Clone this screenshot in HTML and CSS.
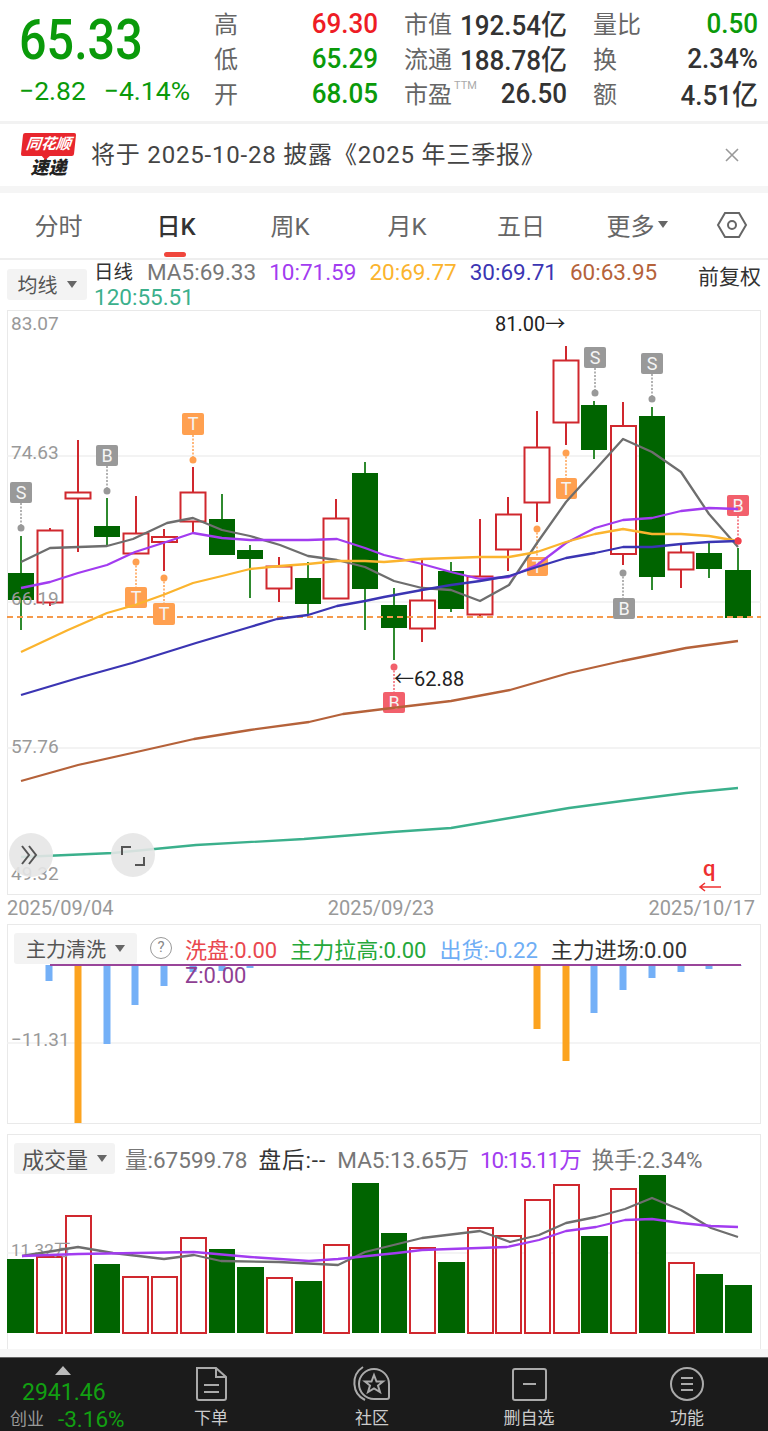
FILE: index.html
```html
<!DOCTYPE html>
<html>
<head>
  <title>65.33 日K</title>
  <link rel="stylesheet" href="styles.css">
</head>
<body>
  <div class="page">
    <!-- quote header -->
    <div class="quote">
      <div class="price-box">
        <div class="price"><span class="tall">65.33</span></div>
        <div class="change"><span>−2.82</span><span>−4.14%</span></div>
      </div>
      <div class="stats">
        <div class="stat"><span class="label">高</span><span class="val red tall-s">69.30</span></div>
        <div class="stat"><span class="label">市值</span><span class="val tall-s">192.54亿</span></div>
        <div class="stat"><span class="label">量比</span><span class="val green tall-s">0.50</span></div>
        <div class="stat"><span class="label">低</span><span class="val green tall-s">65.29</span></div>
        <div class="stat"><span class="label">流通</span><span class="val tall-s">188.78亿</span></div>
        <div class="stat"><span class="label">换</span><span class="val tall-s">2.34%</span></div>
        <div class="stat"><span class="label">开</span><span class="val green tall-s">68.05</span></div>
        <div class="stat"><span class="label">市盈<sup class="ttm">TTM</sup></span><span class="val tall-s">26.50</span></div>
        <div class="stat"><span class="label">额</span><span class="val tall-s">4.51亿</span></div>
      </div>
    </div>

    <!-- notice -->
    <div class="notice">
      <div class="logo">
        <div class="logo-top"><span>同花顺</span></div>
        <div class="logo-bottom">速递</div>
      </div>
      <div class="notice-text">将于 2025-10-28 披露《2025 年三季报》</div>
      <svg class="close" width="16" height="16" viewBox="0 0 16 16"><path d="M2 2L14 14M14 2L2 14"/></svg>
    </div>

    <!-- period tabs -->
    <div class="tabs">
      <div class="tab">分时</div>
      <div class="tab active">日K</div>
      <div class="tab">周K</div>
      <div class="tab">月K</div>
      <div class="tab">五日</div>
      <div class="tab">更多<span class="caret-s"></span></div>
      <div class="tab">
        <svg class="hex" width="32" height="28" viewBox="0 0 32 28"><path d="M9 2H23L30 14L23 26H9L2 14Z"/><circle cx="16" cy="14" r="4"/></svg>
      </div>
    </div>

    <!-- moving average legend -->
    <div class="legend">
      <div class="picker picker-ma">均线<span class="caret"></span></div>
      <div class="legend-text">
        <span class="c-dark legend-first">日线</span>
        <span class="c-grey">MA5:69.33</span>
        <span class="c-purple">10:71.59</span>
        <span class="c-orange">20:69.77</span>
        <span class="c-navy">30:69.71</span>
        <span class="c-brown">60:63.95</span>
        <span class="c-teal">120:55.51</span>
      </div>
      <div class="adjust">前复权</div>
    </div>

    <!-- candle chart -->
    <div class="panel panel-main">
      <svg class="chart" width="754" height="584" viewBox="7 310 754 584">
        <path class="grid" d="M7 456H761M7 602H761M7 748H761"/>
        <text class="axis" x="11" y="330">83.07</text>
        <text class="axis" x="11" y="459">74.63</text>
        <text class="axis" x="11" y="753">57.76</text>

        <path class="wick-g" d="M21 536V630M107 498V545M222 494V555M250 545V598M308 562V615M365 462V630M394 588V660M451 562V612M594 401V459M652 407V590M709 542V578M738 548V618"/>
        <path class="wick-r" d="M50 528V606M78 440V552M136 496V553M164 529V571M193 467V533M279 557V602M336 499V598M422 560V642M480 519V618M508 497V571M537 411V522M566 346V445M623 402V565M681 543V588"/>

        <g class="down">
          <rect x="8" y="573" width="26" height="27"/>
          <rect x="94" y="526" width="26" height="11"/>
          <rect x="209" y="519" width="26" height="36"/>
          <rect x="237" y="550" width="26" height="9"/>
          <rect x="295" y="578" width="26" height="26"/>
          <rect x="352" y="473" width="26" height="116"/>
          <rect x="381" y="605" width="26" height="23"/>
          <rect x="438" y="571" width="26" height="38"/>
          <rect x="581" y="405" width="26" height="45"/>
          <rect x="639" y="416" width="26" height="161"/>
          <rect x="696" y="553" width="26" height="16"/>
          <rect x="725" y="570" width="26" height="48"/>
        </g>
        <g class="up">
          <rect x="37.500" y="530.500" width="25" height="72"/>
          <rect x="65.500" y="492.500" width="25" height="6"/>
          <rect x="123.500" y="533.500" width="25" height="20"/>
          <rect x="152" y="537" width="25" height="5"/>
          <rect x="180.500" y="492.500" width="25" height="29"/>
          <rect x="266.500" y="566.500" width="25" height="22"/>
          <rect x="323.500" y="518.500" width="25" height="80"/>
          <rect x="410" y="600.500" width="25" height="28"/>
          <rect x="467.500" y="576.500" width="25" height="38"/>
          <rect x="496" y="514.500" width="25" height="35"/>
          <rect x="524.500" y="447.500" width="25" height="55"/>
          <rect x="553.500" y="360.500" width="25" height="62"/>
          <rect x="611" y="426" width="25" height="128"/>
          <rect x="668.500" y="552.500" width="25" height="17"/>
        </g>

        <text class="axis" x="11" y="605">66.19</text>
        <path class="price-line" d="M7 617H761"/>

        <!-- buy / sell marks -->
        <g class="mark mark-grey">
          <path d="M21 503V528M107 466V491M595 368V393M652 374V399M623 573V598"/>
          <circle cx="21" cy="528" r="3.500"/><circle cx="107" cy="491" r="3.500"/><circle cx="595" cy="393" r="3.500"/><circle cx="652" cy="399" r="3.500"/><circle cx="623" cy="573" r="3.500"/>
          <rect x="10" y="482" width="22" height="21" rx="2"/><rect x="96" y="445" width="22" height="21" rx="2"/><rect x="584" y="347" width="22" height="21" rx="2"/><rect x="641" y="353" width="22" height="21" rx="2"/><rect x="613" y="598" width="22" height="21" rx="2"/>
        </g>
        <g class="mark mark-orange">
          <path d="M193 435V460M136 562V587M164 578V603M566 453V478M537 529V557"/>
          <circle cx="193" cy="460" r="3.500"/><circle cx="136" cy="562" r="3.500"/><circle cx="164" cy="578" r="3.500"/><circle cx="566" cy="453" r="3.500"/><circle cx="537" cy="529" r="3.500"/>
          <rect x="182" y="413" width="22" height="22" rx="2"/><rect x="125" y="587" width="22" height="21" rx="2"/><rect x="153" y="603" width="22" height="22" rx="2"/><rect x="556" y="478" width="21" height="21" rx="2"/><rect x="527" y="557" width="21" height="19" rx="2"/>
        </g>
        <g class="mark mark-red">
          <path d="M738 516V541M394 667V692"/>
          <circle cx="738" cy="541" r="3.500"/><circle cx="394" cy="667" r="3.500"/>
          <rect x="727" y="495" width="22" height="21" rx="2"/><rect x="383" y="692" width="22" height="21" rx="2"/>
        </g>
        <g class="mark-text">
          <text x="21" y="499">S</text><text x="107" y="462">B</text><text x="595" y="364">S</text><text x="652" y="370">S</text><text x="624" y="615">B</text>
          <text x="193" y="430">T</text><text x="136" y="604">T</text><text x="164" y="620">T</text><text x="566" y="495">T</text><text x="537" y="573">T</text>
          <text x="738" y="512">B</text><text x="394" y="709">B</text>
        </g>

        <!-- moving averages -->
        <polyline class="ma c5" points="21,562 50,548 107,546 133,539 167,523 193,518 222,530 250,536 280,545 308,556 337,560 365,567 394,581 422,588 451,590 480,601 509,585 537,543 566,502 595,470 623,439 652,452 681,472 709,514 738,547"/>
        <polyline class="ma c10" points="21,588 50,582 78,573 107,565 135,552 163,543 193,533 222,538 250,540 280,540 308,540 337,539 365,548 384,555 422,564 451,572 480,579 509,577 537,565 566,543 595,528 623,520 652,518 681,511 709,508 738,509"/>
        <polyline class="ma c20" points="21,652 68,630 107,613 135,605 163,595 193,583 222,576 250,569 280,566 308,564 337,561 365,561 384,562 422,559 451,558 480,557 509,557 537,552 566,542 595,534 623,529 652,534 681,534 709,536 738,541"/>
        <polyline class="ma c30" points="21,695 78,678 132,663 196,643 250,627 277,619 308,615 337,606 365,601 384,597 422,590 451,585 480,581 509,576 537,567 566,558 595,553 623,547 652,547 681,544 709,542 738,541"/>
        <polyline class="ma c60" points="21,781 78,765 132,753 194,739 250,730 309,722 343,714 392,708 451,701 510,690 569,673 622,661 686,648 738,641"/>
        <polyline class="ma c120" points="21,857 113,853 196,845 304,839 392,832 451,828 510,818 569,808 622,801 686,793 738,788"/>

        <circle class="dot-red" cx="738" cy="541" r="3.500"/>

        <text class="peak" x="495" y="331">81.00→</text>
        <text class="peak" x="394" y="686">←62.88</text>

        <!-- overlay buttons -->
        <text class="axis" x="11" y="880">49.32</text>
        <circle class="round-btn" cx="31" cy="855" r="22"/>
        <path class="round-ico" d="M22 846L29 855L22 864M29 846L36 855L29 864"/>
        <circle class="round-btn" cx="133" cy="855" r="22"/>
        <path class="round-ico" d="M122 855V847H131M144 857V865H135"/>

        <text class="q" x="703" y="876">q</text>
        <path class="q-arrow" d="M721 887H700M705 883L700 887L705 891"/>
      </svg>
    </div>

    <div class="dates"><span>2025/09/04</span><span>2025/09/23</span><span>2025/10/17</span></div>

    <!-- capital indicator -->
    <div class="panel panel-flow">
      <svg class="chart" width="754" height="199" viewBox="7 924 754 199">
        <path class="grid" d="M7 1043H761"/>
        <g class="bar-blue">
          <rect x="45.500" y="965" width="7" height="16"/>
          <rect x="103.500" y="965" width="7" height="79"/>
          <rect x="131.500" y="965" width="7" height="40"/>
          <rect x="160.500" y="965" width="7" height="21"/>
          <rect x="189.500" y="965" width="7" height="7"/>
          <rect x="218.500" y="965" width="7" height="6"/>
          <rect x="246.500" y="965" width="7" height="3"/>
          <rect x="590.500" y="965" width="7" height="48"/>
          <rect x="619.500" y="965" width="7" height="25"/>
          <rect x="648.500" y="965" width="7" height="13"/>
          <rect x="677.500" y="965" width="7" height="7"/>
          <rect x="705.500" y="965" width="7" height="4"/>
          <rect x="734.500" y="965" width="7" height="1"/>
        </g>
        <g class="bar-orange">
          <rect x="74.500" y="965" width="7" height="158"/>
          <rect x="533.500" y="965" width="7" height="64"/>
          <rect x="562.500" y="965" width="7" height="96"/>
        </g>
        <path class="zero-line" d="M50 965H741"/>
        <text class="axis" x="11" y="1046">−11.31</text>
      </svg>
      <div class="panel-head head-flow">
        <div class="picker picker-flow">主力清洗<span class="caret"></span></div>
        <span class="help">?</span>
        <span class="flow-red">洗盘:0.00</span>
        <span class="flow-green">主力拉高:0.00</span>
        <span class="flow-blue">出货:-0.22</span>
        <span class="flow-dark">主力进场:0.00</span>
      </div>
      <div class="flow-z">Z:0.00</div>
    </div>

    <!-- volume -->
    <div class="panel panel-vol">
      <svg class="chart" width="754" height="214" viewBox="7 1134 754 214">
        <path class="grid" d="M7 1253H761"/>
        <g class="down">
          <rect x="7" y="1259" width="27" height="74"/>
          <rect x="94" y="1264" width="26" height="69"/>
          <rect x="209" y="1249" width="26" height="84"/>
          <rect x="237" y="1267" width="27" height="66"/>
          <rect x="295" y="1281" width="27" height="52"/>
          <rect x="352" y="1183" width="27" height="150"/>
          <rect x="381" y="1233" width="26" height="100"/>
          <rect x="438" y="1262" width="27" height="71"/>
          <rect x="581" y="1236" width="27" height="97"/>
          <rect x="639" y="1175" width="27" height="158"/>
          <rect x="696" y="1274" width="27" height="59"/>
          <rect x="725" y="1285" width="27" height="48"/>
        </g>
        <g class="up">
          <rect x="37" y="1257" width="25" height="76"/>
          <rect x="66" y="1216" width="25" height="117"/>
          <rect x="123" y="1277" width="25" height="56"/>
          <rect x="152" y="1277" width="25" height="56"/>
          <rect x="181" y="1238" width="25" height="95"/>
          <rect x="267" y="1278" width="25" height="55"/>
          <rect x="324" y="1245" width="25" height="88"/>
          <rect x="410" y="1248" width="25" height="85"/>
          <rect x="468" y="1228" width="25" height="105"/>
          <rect x="496" y="1236" width="25" height="97"/>
          <rect x="525" y="1200" width="25" height="133"/>
          <rect x="554" y="1185" width="25" height="148"/>
          <rect x="611" y="1189" width="25" height="144"/>
          <rect x="669" y="1263" width="25" height="70"/>
        </g>
        <text class="axis axis-vol" x="11" y="1256">11.32万</text>
        <polyline class="ma c5" points="22,1256 78,1247 113,1253 164,1259 194,1255 221,1261 279,1262 338,1265 365,1252 422,1238 480,1231 510,1242 539,1235 566,1223 596,1217 625,1209 652,1198 681,1210 711,1228 738,1237"/>
        <polyline class="ma c10" points="22,1256 78,1254 137,1253 194,1252 250,1257 309,1261 338,1259 397,1253 422,1250 507,1247 539,1240 566,1231 596,1227 625,1220 652,1219 681,1223 711,1226 738,1227"/>
      </svg>
      <div class="panel-head head-vol">
        <div class="picker picker-vol">成交量<span class="caret"></span></div>
        <span class="c-grey">量:67599.78</span>
        <span class="c-dark vol-after">盘后:--</span>
        <span class="c-grey">MA5:13.65万</span>
        <span class="c-purple vol-narrow">10:15.11万</span>
        <span class="c-grey">换手:2.34%</span>
      </div>
    </div>
    <div class="strip"></div>

    <!-- bottom bar -->
    <div class="footer">
      <div class="index">
        <span class="index-up"></span>
        <div class="index-val">2941.46</div>
        <div class="index-row"><span class="index-name">创业</span><span class="index-pct">-3.16%</span></div>
      </div>
      <div class="foot-item">
        <svg width="36" height="36" viewBox="0 0 36 36"><path d="M4 2H23L33 11V32Q33 34 31 34H6Q4 34 4 32ZM11 19H26M11 26H26"/><path d="M23 2V11H33"/></svg>
        <span>下单</span>
      </div>
      <div class="foot-item">
        <svg width="40" height="36" viewBox="0 0 40 36"><path d="M11 1A19 19 0 0 0 13 34M37 18V31Q37 33 35 33H22A15 15 0 1 1 37 18Z"/><path d="M22 9L24.500 15.500H31L26 19.500L28 26L22 22.500L16 26L18 19.500L13 15.500H19.500Z"/></svg>
        <span>社区</span>
      </div>
      <div class="foot-item">
        <svg width="36" height="36" viewBox="0 0 36 36"><rect x="2" y="3" width="33" height="31" rx="2"/><path d="M12 18H25"/></svg>
        <span>删自选</span>
      </div>
      <div class="foot-item">
        <svg width="36" height="36" viewBox="0 0 36 36"><circle cx="18" cy="18" r="16"/><path d="M12 12H24M12 18H24M12 24H24"/></svg>
        <span>功能</span>
      </div>
    </div>
  </div>
</body>
</html>
```

FILE: styles.css
```css
* {
  box-sizing: border-box;
}

body {
  margin: 0;
  background: #fff;
  font-family: Roboto, "Noto Sans CJK SC", sans-serif;
  color: #333;
}

.page {
  width: 768px;
  height: 1431px;
  overflow: hidden;
}

/* quote header */
.quote {
  display: flex;
  height: 124px;
  border-bottom: 3px solid #f2f2f2;
}

.price-box {
  width: 214px;
  padding: 13px 0 0 19px;
}

.price {
  font-size: 48.500px;
  font-weight: 500;
  line-height: 56px;
  color: #0a9a0a;
}

.tall {
  display: inline-block;
  transform: scaleY(1.15);
}

.change {
  display: flex;
  gap: 18px;
  margin-top: 6px;
  font-size: 26.500px;
  line-height: 32px;
  color: #0a9a0a;
}

.stats {
  display: grid;
  grid-template-columns: 164px 163px 165px;
  grid-auto-rows: 35px;
  column-gap: 26px;
  padding-top: 5px;
}

.stat {
  display: flex;
  justify-content: space-between;
  align-items: center;
}

.label {
  font-size: 24px;
  color: #666;
  white-space: nowrap;
}

.val {
  font-size: 26px;
  font-weight: 500;
  color: #333;
  white-space: nowrap;
}

.tall-s {
  display: inline-block;
  transform: scaleY(1.08);
}

.val.red {
  color: #ee1c25;
}

.val.green {
  color: #0a9a0a;
}

.ttm {
  font-size: 11px;
  color: #aaa;
  vertical-align: 14px;
  line-height: 0;
  margin-left: 2px;
}

/* notice */
.notice {
  display: flex;
  align-items: center;
  height: 69px;
  padding-left: 22px;
  border-bottom: 7px solid #f5f5f5;
}

.logo {
  width: 53px;
  margin-right: 16px;
  text-align: center;
}

.logo-top {
  position: relative;
  height: 23px;
  background: #e8262d;
  border-radius: 2px;
  transform: skewX(-6deg);
  color: #fff;
  font-size: 15px;
  font-style: italic;
  font-weight: 700;
  line-height: 23px;
}

.logo-top::after {
  content: "";
  position: absolute;
  left: 21px;
  bottom: -4px;
  border: 4px solid transparent;
  border-top: 4px solid #e8262d;
  border-bottom: 0;
}

.logo-bottom {
  margin-top: 2px;
  font-size: 18px;
  font-style: italic;
  font-weight: 900;
  line-height: 20px;
  color: #222;
}

.notice-text {
  flex: 1;
  margin-top: -5px;
  font-size: 24px;
  letter-spacing: 0.800px;
  color: #444;
  white-space: nowrap;
}

.close {
  margin-right: 28px;
}

.close path {
  fill: none;
  stroke: #999;
  stroke-width: 1.600;
}

/* tabs */
.tabs {
  display: grid;
  grid-template-columns: 117px 118px 110px 124px 104px 128px 62px;
  height: 67px;
  border-bottom: 2px solid #eee;
}

.tab {
  position: relative;
  display: flex;
  align-items: center;
  justify-content: center;
  padding-bottom: 2px;
  font-size: 24px;
  color: #666;
}

.tab.active {
  color: #333;
  font-weight: 500;
}

.tab.active::after {
  content: "";
  position: absolute;
  left: 47px;
  bottom: 1px;
  width: 22px;
  height: 5px;
  border-radius: 3px;
  background: #f0463c;
}

.caret-s {
  margin-left: 3px;
  border: 5px solid transparent;
  border-top: 7px solid #666;
  border-bottom: 0;
}

.hex path,
.hex circle {
  fill: none;
  stroke: #666;
  stroke-width: 2;
}

/* legend */
.legend {
  display: flex;
  height: 50px;
  padding-left: 7px;
}

.picker {
  display: flex;
  align-items: center;
  justify-content: center;
  gap: 9px;
  height: 31px;
  border-radius: 3px;
  background: #f3f3f3;
  font-size: 20px;
  color: #555;
}

.picker-ma {
  flex: none;
  width: 80px;
  margin-top: 9px;
}

.legend-text {
  display: flex;
  flex-wrap: wrap;
  column-gap: 13px;
  width: 590px;
  padding-left: 7px;
  font-size: 22.500px;
  line-height: 25px;
}

.legend-first {
  margin-right: 1px;
  font-size: 19.500px;
}

.caret {
  border: 5px solid transparent;
  border-top: 7px solid #666;
  border-bottom: 0;
}

.c-dark { color: #333; }
.c-grey { color: #777; }
.c-purple { color: #a23cf0; }
.c-orange { color: #fbb42e; }
.c-navy { color: #3b35b3; }
.c-brown { color: #b5623a; }
.c-teal { color: #3bb08c; }

.adjust {
  margin-left: 21px;
  font-size: 21px;
  line-height: 34px;
  white-space: nowrap;
}

/* chart panels */
.panel {
  position: relative;
  width: 754px;
  margin-left: 7px;
  border: 1.500px solid #e9e9e9;
}

.panel-main {
  height: 585px;
}

.panel-flow {
  height: 200px;
}

.panel-vol {
  height: 215px;
  margin-top: 10px;
  border-bottom: 0;
}

.chart {
  position: absolute;
  left: -1.500px;
  top: -1.500px;
}

.grid {
  fill: none;
  stroke: #f0f0f0;
  stroke-width: 1.500;
}

.axis {
  font-size: 19px;
  fill: #999;
}

.axis-vol {
  font-size: 17px;
}

.wick-g {
  fill: none;
  stroke: #2f8a2f;
  stroke-width: 2;
}

.wick-r {
  fill: none;
  stroke: #d0282e;
  stroke-width: 2;
}

.down rect {
  fill: #006400;
}

.up rect {
  fill: #fff;
  stroke: #d0282e;
  stroke-width: 2;
}

.price-line {
  fill: none;
  stroke: #f59a4c;
  stroke-width: 2;
  stroke-dasharray: 6 4;
}

.mark path {
  fill: none;
  stroke-width: 1.500;
  stroke-dasharray: 2 1.500;
}

.mark-grey rect,
.mark-grey circle {
  fill: #999;
}

.mark-grey path {
  stroke: #999;
}

.mark-orange rect,
.mark-orange circle {
  fill: #ffa050;
}

.mark-orange path {
  stroke: #ffa050;
}

.mark-red rect,
.mark-red circle {
  fill: #f2606c;
}

.mark-red path {
  stroke: #f2606c;
}

.mark-text text {
  font-size: 18px;
  fill: #f4f4f4;
  text-anchor: middle;
}

.ma {
  fill: none;
  stroke-width: 2.300;
  stroke-linejoin: round;
}

.c5 { stroke: #6e6e6e; }
.c10 { stroke: #a23cf0; }
.c20 { stroke: #fbb42e; }
.c30 { stroke: #3b35b3; }
.c60 { stroke: #b5623a; }
.c120 { stroke: #3bb08c; }

.dot-red {
  fill: #f2404c;
}

.peak {
  font-size: 20px;
  fill: #222;
}

.round-btn {
  fill: #e6e6e6;
  opacity: 0.9;
}

.round-ico {
  fill: none;
  stroke: #555;
  stroke-width: 2;
}

.q {
  font-size: 22px;
  font-weight: 500;
  fill: #ee3030;
}

.q-arrow {
  fill: none;
  stroke: #ee3030;
  stroke-width: 1.600;
}

/* date axis */
.dates {
  display: flex;
  justify-content: space-between;
  height: 29px;
  padding: 0 13px 0 7px;
  font-size: 20px;
  line-height: 27px;
  color: #999;
}

/* indicator panels */
.panel-head {
  position: relative;
  display: flex;
  align-items: center;
  padding: 7px 0 0 6px;
  white-space: nowrap;
}

.head-flow {
  gap: 13px;
  font-size: 22px;
}

.head-vol {
  gap: 11px;
  font-size: 22.500px;
}

.vol-after {
  font-variant-ligatures: none;
  letter-spacing: 1px;
}

.vol-narrow {
  letter-spacing: -1px;
}

.picker-flow {
  width: 123px;
  font-size: 20px;
}

.picker-vol {
  width: 101px;
  margin-right: -1px;
  font-size: 22px;
}

.help {
  width: 22px;
  height: 22px;
  border: 1.500px solid #999;
  border-radius: 50%;
  font-size: 15px;
  line-height: 19px;
  text-align: center;
  color: #888;
}

.flow-red { color: #e9484f; }
.flow-green { color: #25a83a; }
.flow-blue { color: #6faef5; }
.flow-dark { color: #333; }

.flow-z {
  position: absolute;
  left: 177px;
  top: 38px;
  font-size: 22px;
  color: #8f3f93;
}

.bar-blue rect {
  fill: #74b0f7;
}

.bar-orange rect {
  fill: #fca31f;
}

.zero-line {
  fill: none;
  stroke: #99459a;
  stroke-width: 2;
}

.strip {
  height: 8px;
  background: #f6f6f6;
}

/* bottom bar */
.footer {
  display: grid;
  grid-template-columns: 130px 162px 160px 154px 162px;
  height: 75px;
  background: #1b1b1b;
  border-top: 1px solid #666;
}

.index {
  position: relative;
  padding: 23px 0 0 22px;
}

.index-up {
  position: absolute;
  left: 55px;
  top: 8px;
  border: 8px solid transparent;
  border-top: 0;
  border-bottom: 9px solid #bbb;
}

.index-val {
  font-size: 23px;
  line-height: 24px;
  color: #12a012;
}

.index-row {
  display: flex;
  align-items: center;
  gap: 14px;
  margin: 3px 0 0 -12px;
  line-height: 22px;
}

.index-name {
  font-size: 17px;
  color: #999;
}

.index-pct {
  font-size: 22.500px;
  color: #12a012;
}

.foot-item {
  display: flex;
  flex-direction: column;
  align-items: center;
  padding-top: 8px;
  font-size: 17px;
  color: #ccc;
}

.foot-item span {
  line-height: 26px;
  margin-top: 3px;
}

.foot-item svg {
  overflow: visible;
}

.foot-item svg * {
  fill: none;
  stroke: #aaa;
  stroke-width: 2;
}
```
